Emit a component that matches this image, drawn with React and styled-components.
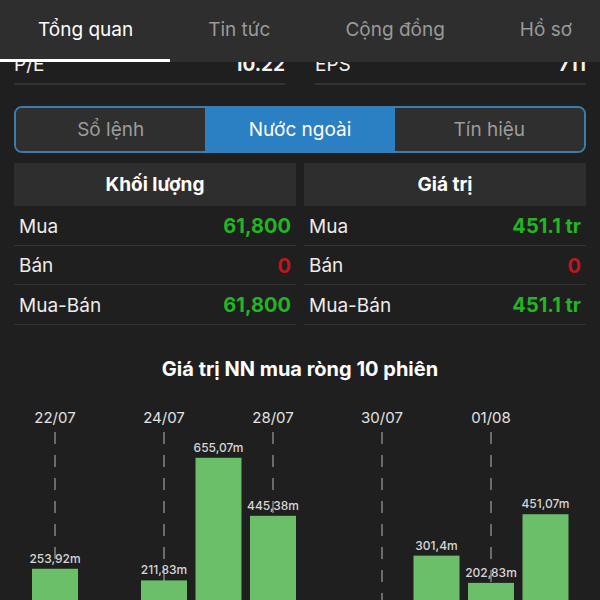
import React from "react";
import styled, { createGlobalStyle } from "styled-components";

const GlobalStyle = createGlobalStyle`
  body {
    margin: 0;
    background: #1f1f1f;
    font-family: Inter, "Noto Sans", sans-serif;
    color: #f2f2f2;
  }
`;

const Page = styled.div`
  width: 600px;
  height: 600px;
  overflow: hidden;
  background: #1f1f1f;
`;

const TabBar = styled.div`
  display: flex;
  height: 62px;
  background: #2e2e2e;
  white-space: nowrap;
  overflow: hidden;
`;

const Tab = styled.div`
  box-sizing: border-box;
  flex: none;
  height: 62px;
  padding: 0 37px 0 38px;
  display: flex;
  align-items: center;
  font-size: 19px;
  color: ${p => (p.$active ? "#ffffff" : "#9a9a9a")};
  border-bottom: 3px solid ${p => (p.$active ? "#ffffff" : "transparent")};
`;

const Peek = styled.div`
  height: 23px;
  overflow: hidden;
  display: flex;
  align-items: flex-end;
`;

const StatGrid = styled.div`
  flex: 1;
  display: grid;
  grid-template-columns: 1fr 1fr;
  column-gap: 30px;
  padding: 0 14px;
`;

const StatRow = styled.div`
  box-sizing: border-box;
  height: 40px;
  display: flex;
  align-items: center;
  justify-content: space-between;
  border-bottom: 2px solid #333333;
  font-size: 19px;
`;

const StatValue = styled.span`
  font-weight: 700;
`;

const Body = styled.div`
  padding: 21px 14px 0;
`;

const Segmented = styled.div`
  display: flex;
  height: 47px;
  box-sizing: border-box;
  border: 2px solid #3d7dad;
  border-radius: 8px;
  overflow: hidden;
`;

const Segment = styled.div`
  flex: 1;
  display: flex;
  align-items: center;
  justify-content: center;
  font-size: 19px;
  background: ${p => (p.$active ? "#2a80c2" : "#2f2f2f")};
  color: ${p => (p.$active ? "#ffffff" : "#9c9c9c")};
`;

const Tables = styled.div`
  margin-top: 10px;
  display: grid;
  grid-template-columns: 1fr 1fr;
  column-gap: 8px;
`;

const TableHead = styled.div`
  height: 43px;
  display: flex;
  align-items: center;
  justify-content: center;
  background: #2e2e2e;
  font-size: 19px;
  font-weight: 700;
  color: #ffffff;
`;

const Row = styled.div`
  box-sizing: border-box;
  height: 39.5px;
  padding: 2px 5px 0;
  display: flex;
  align-items: center;
  justify-content: space-between;
  border-bottom: 1.5px solid #343434;
  font-size: 19px;
  color: #ececec;
`;

const Amount = styled.span`
  font-size: 20px;
  font-weight: 700;
  color: ${p => (p.$tone === "down" ? "#c0161c" : "#22b524")};
`;

const ChartTitle = styled.div`
  margin-top: 33px;
  line-height: 22px;
  text-align: center;
  font-size: 20px;
  font-weight: 700;
  color: #ffffff;
`;

const ChartSvg = styled.svg`
  display: block;
  margin-top: 9px;
`;

const tabs = ["Tổng quan", "Tin tức", "Cộng đồng", "Hồ sơ"];
const segments = ["Sổ lệnh", "Nước ngoài", "Tín hiệu"];

const tables = [
  {
    title: "Khối lượng",
    rows: [
      ["Mua", "61,800", "up"],
      ["Bán", "0", "down"],
      ["Mua-Bán", "61,800", "up"],
    ],
  },
  {
    title: "Giá trị",
    rows: [
      ["Mua", "451.1 tr", "up"],
      ["Bán", "0", "down"],
      ["Mua-Bán", "451.1 tr", "up"],
    ],
  },
];

const sessions = [
  { date: "22/07", value: 253.92 },
  { date: "23/07", value: null },
  { date: "24/07", value: 211.83 },
  { date: "25/07", value: 655.07 },
  { date: "28/07", value: 445.38 },
  { date: "29/07", value: null },
  { date: "30/07", value: null },
  { date: "31/07", value: 301.4 },
  { date: "01/08", value: 202.83 },
  { date: "02/08", value: 451.07 },
];

const fmt = v => `${String(v).replace(".", ",")}m`;

function NetBuyChart() {
  const base = 640;
  const scale = 0.2766;
  const slot = 54.5;
  return (
    <ChartSvg width="600" height="250" viewBox="0 390 600 250">
      {sessions.map((s, i) => {
        const cx = 55 + slot * i;
        if (i % 2 !== 0) return null;
        return (
          <g key={s.date}>
            <text x={cx} y="424" fill="#e2e2e2" fontSize="15" textAnchor="middle" fontFamily="Inter, sans-serif">
              {s.date}
            </text>
            <line x1={cx} y1="433" x2={cx} y2={base} stroke="#858585" strokeWidth="1.5" strokeDasharray="12 11" />
          </g>
        );
      })}
      {sessions.map((s, i) => {
        if (s.value == null) return null;
        const cx = 55 + slot * i;
        const top = base - s.value * scale;
        return (
          <g key={s.date + "b"}>
            <rect x={cx - 23} y={top} width="46" height={base - top} fill="#6cbf69" />
            <text x={cx} y={top - 6} fill="#d6d6d6" fontSize="12" fontWeight="500" textAnchor="middle" fontFamily="Inter, sans-serif">
              {fmt(s.value)}
            </text>
          </g>
        );
      })}
    </ChartSvg>
  );
}

export default function App() {
  return (
    <Page>
      <GlobalStyle />
      <TabBar>
        {tabs.map((t, i) => (
          <Tab key={t} $active={i === 0}>{t}</Tab>
        ))}
      </TabBar>
      <Peek>
        <StatGrid>
          <StatRow>
            <span>P/E</span>
            <StatValue>10.22</StatValue>
          </StatRow>
          <StatRow>
            <span>EPS</span>
            <StatValue>711</StatValue>
          </StatRow>
        </StatGrid>
      </Peek>
      <Body>
        <Segmented>
          {segments.map((s, i) => (
            <Segment key={s} $active={i === 1}>{s}</Segment>
          ))}
        </Segmented>
        <Tables>
          {tables.map(t => (
            <div key={t.title}>
              <TableHead>{t.title}</TableHead>
              {t.rows.map(([label, value, tone]) => (
                <Row key={label}>
                  <span>{label}</span>
                  <Amount $tone={tone}>{value}</Amount>
                </Row>
              ))}
            </div>
          ))}
        </Tables>
      </Body>
      <ChartTitle>Giá trị NN mua ròng 10 phiên</ChartTitle>
      <NetBuyChart />
    </Page>
  );
}
